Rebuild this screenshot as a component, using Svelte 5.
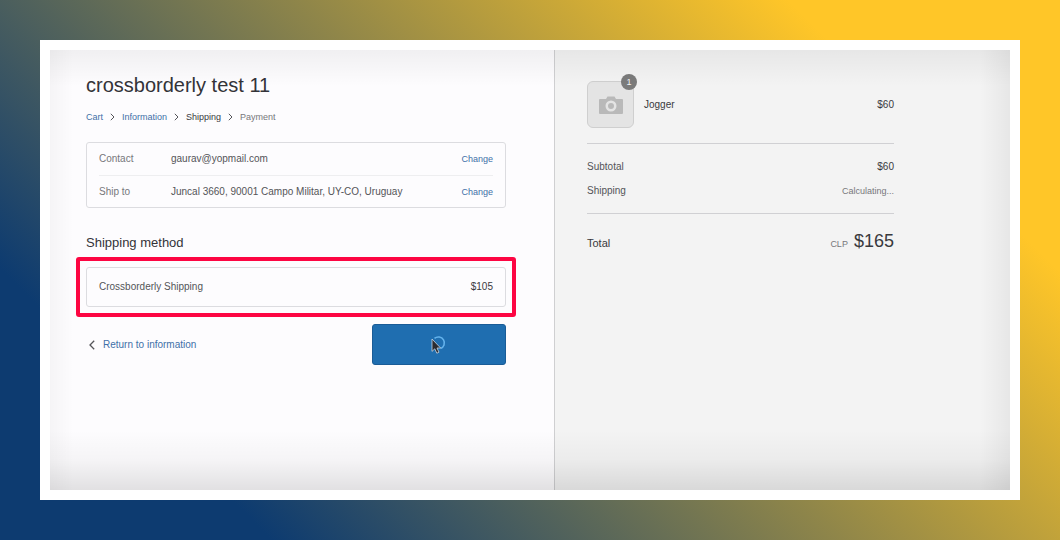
<script lang="ts">
  const store = "crossborderly test 11";

  const steps = [
    { label: "Cart", state: "done" },
    { label: "Information", state: "done" },
    { label: "Shipping", state: "current" },
    { label: "Payment", state: "next" },
  ];

  const review = [
    { label: "Contact", value: "gaurav@yopmail.com" },
    { label: "Ship to", value: "Juncal 3660, 90001 Campo Militar, UY-CO, Uruguay" },
  ];
</script>

<div class="backdrop">
  <div class="frame">
    <main class="main">
      <h1>{store}</h1>

      <nav class="breadcrumb" aria-label="Breadcrumb">
        {#each steps as step, i}
          {#if i > 0}
            <svg class="chevron" viewBox="0 0 5 8" aria-hidden="true">
              <path d="M0.8 0.8 4 4 0.8 7.2" />
            </svg>
          {/if}
          {#if step.state === "done"}
            <a href="#{step.label.toLowerCase()}">{step.label}</a>
          {:else}
            <span class={step.state}>{step.label}</span>
          {/if}
        {/each}
      </nav>

      <dl class="card review">
        {#each review as row}
          <div class="review__row">
            <dt>{row.label}</dt>
            <dd>{row.value}</dd>
            <dd class="review__link">
              <a href="#change" aria-label="Change {row.label}">Change</a>
            </dd>
          </div>
        {/each}
      </dl>

      <h2>Shipping method</h2>
      <div class="highlight">
        <div class="card method">
          <span>Crossborderly Shipping</span>
          <span class="price">$105</span>
        </div>
      </div>

      <div class="actions">
        <a class="back" href="#information">
          <svg viewBox="0 0 6 10" aria-hidden="true">
            <path d="M5.2 0.8 1 5 5.2 9.2" />
          </svg>
          Return to information
        </a>
        <button type="button" aria-label="Continue to payment" aria-busy="true">
          <svg viewBox="0 0 18 20" aria-hidden="true">
            <path class="spinner" d="M4.5 3.4A6 6 0 1 1 10.5 13.6" />
            <path class="cursor" d="M2 4V16.4L4.8 13.8 6.8 18.2 9 17.2 7 13H10.6Z" />
          </svg>
        </button>
      </div>
    </main>

    <aside class="sidebar">
      <div class="summary">
        <div class="product">
          <div class="thumb">
            <svg viewBox="0 0 24 18" aria-hidden="true">
              <path
                fill-rule="evenodd"
                d="M1 3H7L8.5 0.5H15.5L17 3H23Q24 3 24 4V17Q24 18 23 18H1Q0 18 0 17V4Q0 3 1 3ZM12 4.5A5.5 5.5 0 1 0 12 15.5 5.5 5.5 0 1 0 12 4.5ZM12 7A3 3 0 1 1 12 13 3 3 0 1 1 12 7Z"
              />
            </svg>
            <span class="badge">1</span>
          </div>
          <span class="name">Jogger</span>
          <span class="price">$60</span>
        </div>

        <div class="lines">
          <div class="line">
            <span>Subtotal</span>
            <span class="price">$60</span>
          </div>
          <div class="line">
            <span>Shipping</span>
            <small>Calculating...</small>
          </div>
        </div>

        <div class="total">
          <span>Total</span>
          <span><small>CLP</small> <strong>$165</strong></span>
        </div>
      </div>
    </aside>
  </div>
</div>

<style>
  :global(body) {
    margin: 0;
  }

  .backdrop {
    box-sizing: border-box;
    min-height: 100vh;
    padding: 40px;
    display: flex;
    background: linear-gradient(45deg, #0d3b70 17%, #ffc628 83%);
    color: #545458;
    font-family: "Liberation Sans", Arial, sans-serif;
    font-size: 10px;
    line-height: 12px;
  }

  .frame {
    position: relative;
    flex: 1;
    display: grid;
    grid-template-columns: 21fr 19fr;
    border: 10px solid #fff;
    background: #fdfcfe;

    /* soft vignette over both columns */
    &::after {
      content: "";
      position: absolute;
      inset: 0;
      pointer-events: none;
      background:
        linear-gradient(to top, rgba(0, 0, 0, 0.11), rgba(0, 0, 0, 0.03) 30px, transparent 60px),
        linear-gradient(to bottom, rgba(0, 0, 0, 0.05), transparent 36px),
        linear-gradient(to right, rgba(0, 0, 0, 0.03), transparent 24px),
        linear-gradient(to left, rgba(0, 0, 0, 0.05), transparent 30px);
    }
  }

  .main {
    padding: 23px 48px 23px 36px;
  }

  h1,
  h2 {
    margin: 0;
    color: #333338;
    font-weight: 400;
  }

  h1 {
    font-size: 20px;
    line-height: 24px;
  }

  h2 {
    margin: 27px 0 6px;
    font-size: 13px;
    line-height: 16px;
  }

  a {
    color: #3f70a8;
    text-decoration: none;
  }

  small {
    font-size: 9px;
    color: #77777b;
  }

  .price {
    color: #39393d;
  }

  svg {
    fill: none;
    stroke: #55555a;
  }

  .breadcrumb {
    display: flex;
    align-items: center;
    gap: 7px;
    margin-top: 14px;
    font-size: 9px;

    & .chevron {
      width: 5px;
      height: 8px;
    }

    & .current {
      color: #39393d;
    }

    & .next {
      color: #77777b;
    }
  }

  .card {
    box-sizing: border-box;
    border: 1px solid #dcdce0;
    border-radius: 3px;
    padding: 0 12px;
  }

  .review {
    margin: 19px 0 0;
  }

  .review__row {
    box-sizing: border-box;
    display: flex;
    align-items: center;
    height: 32px;

    & + & {
      border-top: 1px solid #eeeef0;
    }

    & dt {
      width: 72px;
      color: #77777b;
    }

    & dd {
      margin: 0;
    }

    & .review__link {
      margin-left: auto;
      font-size: 9px;
    }
  }

  .highlight {
    margin: 0 -10px;
    padding: 6px;
    border: 4px solid #fd0542;
    border-radius: 3px;
  }

  .method {
    display: flex;
    align-items: center;
    justify-content: space-between;
    height: 40px;
  }

  .actions {
    display: flex;
    justify-content: space-between;
    margin-top: 7px;
  }

  .back {
    display: flex;
    align-items: center;
    align-self: center;
    gap: 8px;
    padding: 0 3px;

    & svg {
      width: 6px;
      height: 10px;
      stroke-width: 1.3;
    }
  }

  button {
    display: grid;
    place-items: center;
    width: 134px;
    height: 41px;
    padding: 0;
    border: 1px solid #1a5c97;
    border-radius: 3px;
    background: #1f6eb0;

    & svg {
      width: 18px;
      height: 20px;
    }

    & .spinner {
      stroke: #63b2ec;
      stroke-width: 1.6;
    }

    & .cursor {
      fill: #2b2b30;
      stroke: #c9d6e2;
      stroke-width: 0.8;
    }
  }

  .sidebar {
    padding: 31px 32px;
    border-left: 1px solid #cfcfd1;
    background: #f3f3f3;
  }

  .summary {
    max-width: 307px;
  }

  .product {
    display: flex;
    align-items: center;
    padding-bottom: 15px;

    & .name {
      margin-left: 10px;
      color: #39393d;
    }

    & .price {
      margin-left: auto;
    }
  }

  .thumb {
    position: relative;
    box-sizing: border-box;
    display: grid;
    place-items: center;
    width: 47px;
    height: 47px;
    border: 1px solid #cfcfcf;
    border-radius: 6px;
    background: #e4e4e4;

    & svg {
      width: 24px;
      height: 18px;
      fill: #b9b9b9;
      stroke: none;
    }
  }

  .badge {
    position: absolute;
    top: -8px;
    right: -4px;
    width: 16px;
    border-radius: 8px;
    background: #7b7b7b;
    color: #f3f3f3;
    font-size: 9px;
    line-height: 16px;
    text-align: center;
  }

  .lines {
    display: grid;
    gap: 12px;
    padding: 17px 0 16px;
    border: solid #d0d0d3;
    border-width: 1px 0;
  }

  .line {
    display: flex;
    align-items: center;
    justify-content: space-between;
  }

  .total {
    display: flex;
    align-items: center;
    justify-content: space-between;
    padding-top: 15px;
    color: #39393d;
    font-size: 11px;
    line-height: 24px;

    & > span:first-child {
      line-height: 20px;
    }

    & strong {
      margin-left: 3px;
      font-size: 18px;
      font-weight: 400;
    }
  }
</style>
